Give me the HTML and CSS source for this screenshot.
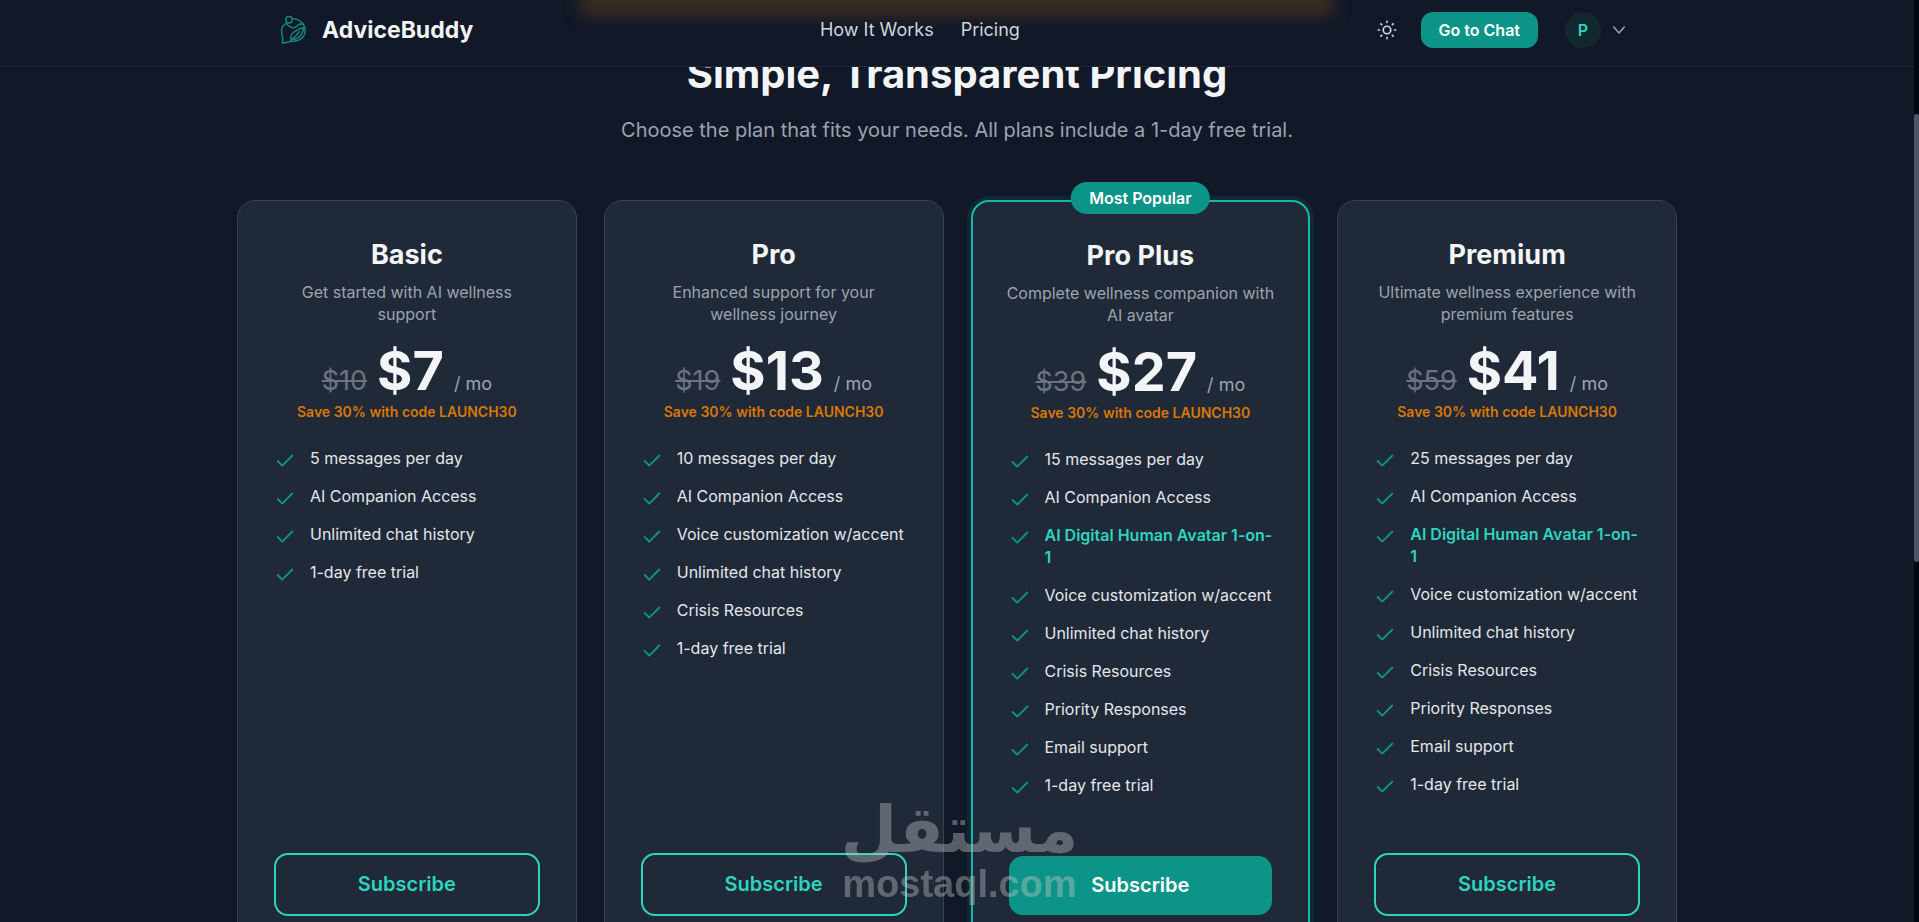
FILE: index.html
```html
<!DOCTYPE html>
<html lang="en">
<head>
    <meta charset="utf-8">
    <meta name="viewport" content="width=device-width, initial-scale=1">
    <title>AdviceBuddy - Pricing</title>
    <link rel="stylesheet" href="styles.css">
</head>
<body>

<svg class="sprite" aria-hidden="true">
    <symbol id="check" viewBox="0 0 24 24"><path d="M20 6 9 17l-5-5"/></symbol>
</svg>

<header class="header">
    <div class="header-inner">
        <a href="#" class="brand">
            <svg class="brand-logo" viewBox="0 0 40 40" aria-hidden="true">
                <circle cx="16" cy="9.700" r="3.200"/>
                <path d="M20.500 8.600C27 9.500 32.200 14 32.200 20.500C32.200 27 26.500 31.500 20 31.200C16 31 12.500 33 9.300 33C10.800 29.500 8.500 25 8.500 20.500C8.500 17 10.500 15 13.500 13.200C15 17 21 19.500 24 16C25.500 14.300 28 13.600 30.500 14.500"/>
                <path d="M18.500 31C15.500 23.500 22 20.500 30.500 17.500C30.500 23 26 30 18.500 29.500M18 30.500C21 28 24 25 26.500 21.500"/>
            </svg>
            <span>AdviceBuddy</span>
        </a>
        <nav class="nav">
            <a href="#how">How It Works</a>
            <a href="#pricing">Pricing</a>
        </nav>
        <div class="actions">
            <button type="button" class="theme-btn" aria-label="Toggle theme">
                <svg viewBox="0 0 24 24" aria-hidden="true"><circle cx="12" cy="12" r="4.500"/><path d="M12 1.500v1.500M12 21v1.500M4.600 4.600l1 1M18.400 18.400l1 1M1.500 12H3M21 12h1.500M4.600 19.400l1-1M18.400 5.600l1-1"/></svg>
            </button>
            <a href="#chat" class="chat-btn">Go to Chat</a>
            <button type="button" class="user-btn" aria-label="Account menu">
                <span class="avatar">P</span>
                <svg viewBox="0 0 24 24" aria-hidden="true"><path d="m5 8 7 8 7-8"/></svg>
            </button>
        </div>
    </div>
</header>

<main class="page">
    <section class="pricing" id="pricing">
        <h2>Simple, Transparent Pricing</h2>
        <p class="subtitle">Choose the plan that fits your needs. All plans include a 1-day free trial.</p>

        <div class="plans">
            <article class="plan">
                <h3>Basic</h3>
                <p class="desc">Get started with AI wellness support</p>
                <p class="price"><s>$10</s><strong>$7</strong><span>/ mo</span></p>
                <p class="save">Save 30% with code LAUNCH30</p>
                <ul class="features">
                    <li><svg><use href="#check"/></svg><span>5 messages per day</span></li>
                    <li><svg><use href="#check"/></svg><span>AI Companion Access</span></li>
                    <li><svg><use href="#check"/></svg><span>Unlimited chat history</span></li>
                    <li><svg><use href="#check"/></svg><span>1-day free trial</span></li>
                </ul>
                <button type="button" class="subscribe">Subscribe</button>
            </article>

            <article class="plan">
                <h3>Pro</h3>
                <p class="desc">Enhanced support for your wellness journey</p>
                <p class="price"><s>$19</s><strong>$13</strong><span>/ mo</span></p>
                <p class="save">Save 30% with code LAUNCH30</p>
                <ul class="features">
                    <li><svg><use href="#check"/></svg><span>10 messages per day</span></li>
                    <li><svg><use href="#check"/></svg><span>AI Companion Access</span></li>
                    <li><svg><use href="#check"/></svg><span>Voice customization w/accent</span></li>
                    <li><svg><use href="#check"/></svg><span>Unlimited chat history</span></li>
                    <li><svg><use href="#check"/></svg><span>Crisis Resources</span></li>
                    <li><svg><use href="#check"/></svg><span>1-day free trial</span></li>
                </ul>
                <button type="button" class="subscribe">Subscribe</button>
            </article>

            <article class="plan popular">
                <div class="badge">Most Popular</div>
                <h3>Pro Plus</h3>
                <p class="desc">Complete wellness companion with AI avatar</p>
                <p class="price"><s>$39</s><strong>$27</strong><span>/ mo</span></p>
                <p class="save">Save 30% with code LAUNCH30</p>
                <ul class="features">
                    <li><svg><use href="#check"/></svg><span>15 messages per day</span></li>
                    <li><svg><use href="#check"/></svg><span>AI Companion Access</span></li>
                    <li><svg><use href="#check"/></svg><span class="highlight">AI Digital Human Avatar 1-on-1</span></li>
                    <li><svg><use href="#check"/></svg><span>Voice customization w/accent</span></li>
                    <li><svg><use href="#check"/></svg><span>Unlimited chat history</span></li>
                    <li><svg><use href="#check"/></svg><span>Crisis Resources</span></li>
                    <li><svg><use href="#check"/></svg><span>Priority Responses</span></li>
                    <li><svg><use href="#check"/></svg><span>Email support</span></li>
                    <li><svg><use href="#check"/></svg><span>1-day free trial</span></li>
                </ul>
                <button type="button" class="subscribe">Subscribe</button>
            </article>

            <article class="plan">
                <h3>Premium</h3>
                <p class="desc">Ultimate wellness experience with premium features</p>
                <p class="price"><s>$59</s><strong>$41</strong><span>/ mo</span></p>
                <p class="save">Save 30% with code LAUNCH30</p>
                <ul class="features">
                    <li><svg><use href="#check"/></svg><span>25 messages per day</span></li>
                    <li><svg><use href="#check"/></svg><span>AI Companion Access</span></li>
                    <li><svg><use href="#check"/></svg><span class="highlight">AI Digital Human Avatar 1-on-1</span></li>
                    <li><svg><use href="#check"/></svg><span>Voice customization w/accent</span></li>
                    <li><svg><use href="#check"/></svg><span>Unlimited chat history</span></li>
                    <li><svg><use href="#check"/></svg><span>Crisis Resources</span></li>
                    <li><svg><use href="#check"/></svg><span>Priority Responses</span></li>
                    <li><svg><use href="#check"/></svg><span>Email support</span></li>
                    <li><svg><use href="#check"/></svg><span>1-day free trial</span></li>
                </ul>
                <button type="button" class="subscribe">Subscribe</button>
            </article>
        </div>
    </section>
</main>

<div class="watermark">
    <span class="watermark-ar" lang="ar" dir="rtl">مستقل</span>
    <span class="watermark-en">mostaql.com</span>
</div>

<div class="scrollbar" aria-hidden="true"><div class="thumb"></div></div>

</body>
</html>
```
FILE: styles.css
```css
* {
    box-sizing: border-box;
    margin: 0;
    padding: 0;
}

body {
    height: 100vh;
    overflow: hidden;
    padding-right: 5px;
    background: #111827;
    color: #f3f4f6;
    font: 16px/22px Inter, sans-serif;
}

a {
    color: inherit;
    text-decoration: none;
}

button {
    font-family: inherit;
    color: inherit;
    background: none;
    border: 0;
    cursor: pointer;
}

svg {
    fill: none;
    stroke: currentColor;
    stroke-width: 2;
    stroke-linecap: round;
    stroke-linejoin: round;
}

.sprite {
    display: none;
}

/* header */
.header {
    position: fixed;
    top: 0;
    left: 0;
    right: 5px;
    z-index: 10;
    overflow: hidden;
    background: #111827;
    border-bottom: 1px solid #1f2937;
}

/* amber glow at the top edge */
.header::before {
    content: "";
    position: absolute;
    z-index: -1;
    top: -40px;
    left: 50%;
    width: 752px;
    height: 56px;
    transform: translateX(-50%);
    background: #3a2d22;
    filter: blur(8px);
}

.header-inner {
    display: flex;
    align-items: center;
    justify-content: space-between;
    max-width: 1440px;
    margin: 0 auto;
    padding: 10px 36px 16px;
}

.brand {
    display: flex;
    align-items: center;
    gap: 9px;
    font-size: 23px;
    font-weight: 700;
}

.brand-logo {
    width: 40px;
    height: 40px;
    color: #14857b;
    stroke-width: 1.5;
}

.nav {
    display: flex;
    gap: 27px;
    font-size: 18px;
    color: #d1d5db;
}

.actions {
    display: flex;
    align-items: center;
}

.theme-btn {
    display: flex;
    justify-content: center;
    width: 40px;
    margin-right: 14px;
    color: #d1d5db;
}

.theme-btn svg {
    width: 20px;
    height: 20px;
}

.chat-btn {
    padding: 7px 18px;
    margin-right: 14px;
    border-radius: 12px;
    background: #0d9488;
    color: #fff;
    font-weight: 600;
}

.user-btn {
    display: flex;
    align-items: center;
    gap: 9px;
    padding: 0 13px;
}

.user-btn svg {
    width: 18px;
    height: 18px;
    color: #9ca3af;
}

.avatar {
    width: 36px;
    border-radius: 50%;
    background: #12282f;
    color: #2dd4bf;
    font-size: 16px;
    font-weight: 600;
    line-height: 36px;
}

/* pricing */
.pricing {
    max-width: 1440px;
    margin: 0 auto;
    padding-top: 50px;
    text-align: center;
}

.pricing h2 {
    font-size: 40px;
    line-height: 48px;
    font-weight: 700;
}

.subtitle {
    margin: 17px 0 55px;
    color: #9ca3af;
    font-size: 20px;
    line-height: 30px;
}

.plans {
    display: grid;
    grid-template-columns: repeat(4, 1fr);
    gap: 27px;
}

.plan {
    position: relative;
    display: flex;
    flex-direction: column;
    padding: 36px;
    border: 1px solid #374151;
    border-radius: 18px;
    background: #1f2937;
}

.plan.popular {
    border: 2px solid #14b8a6;
    box-shadow: 0 0 0 4px rgba(20, 184, 166, 0.1);
}

.badge {
    position: absolute;
    top: -20px;
    left: 50%;
    transform: translateX(-50%);
    padding: 5px 18px;
    border-radius: 16px;
    background: #0d9488;
    color: #fff;
    font-weight: 600;
    white-space: nowrap;
}

.plan h3 {
    margin-bottom: 9px;
    font-size: 27px;
    line-height: 35px;
    font-weight: 700;
}

.desc {
    color: #9ca3af;
}

.popular .desc {
    margin: 0 -4px;
}

.price {
    display: flex;
    align-items: baseline;
    justify-content: center;
    gap: 10px;
    margin-top: 16px;
    line-height: 27px;
}

.price s {
    color: #6b7280;
    font-size: 27px;
}

.price strong {
    font-size: 54px;
    line-height: 60px;
    font-weight: 700;
}

.price span {
    color: #9ca3af;
    font-size: 18px;
}

.save {
    margin-bottom: 24px;
    color: #d97706;
    font-size: 14px;
    font-weight: 600;
}

.features {
    flex: 1;
    display: flex;
    flex-direction: column;
    gap: 16px;
    margin: 0 -2px 58px 0;
    list-style: none;
    text-align: left;
    color: #e5e7eb;
}

.features li {
    display: flex;
    gap: 14px;
}

.features svg {
    flex: none;
    width: 22px;
    height: 22px;
    margin: 3px 0 -3px;
    color: #0d9488;
}

.highlight {
    color: #2dd4bf;
    font-weight: 600;
}

.subscribe {
    padding: 16px;
    border: 2px solid #2dd4bf;
    border-radius: 14px;
    color: #2dd4bf;
    font-size: 20px;
    line-height: 27px;
    font-weight: 600;
}

.popular .subscribe {
    border: 0;
    background: #0d9488;
    color: #fff;
}

/* watermark */
.watermark {
    position: fixed;
    left: 50%;
    bottom: 20px;
    z-index: 20;
    transform: translateX(-50%);
    display: flex;
    flex-direction: column;
    align-items: center;
    color: #c6c6c6;
    opacity: 0.4;
}

.watermark-ar {
    font: 700 65px/72px "DejaVu Sans", sans-serif;
}

.watermark-en {
    font: 700 38px/36px "Liberation Sans", Arial, sans-serif;
}

.scrollbar {
    position: fixed;
    top: 0;
    right: 0;
    width: 5px;
    height: 100%;
    padding-top: 114px;
    background: #030712;
}

.thumb {
    height: 448px;
    border-radius: 3px;
    background: #4b5563;
}
```
